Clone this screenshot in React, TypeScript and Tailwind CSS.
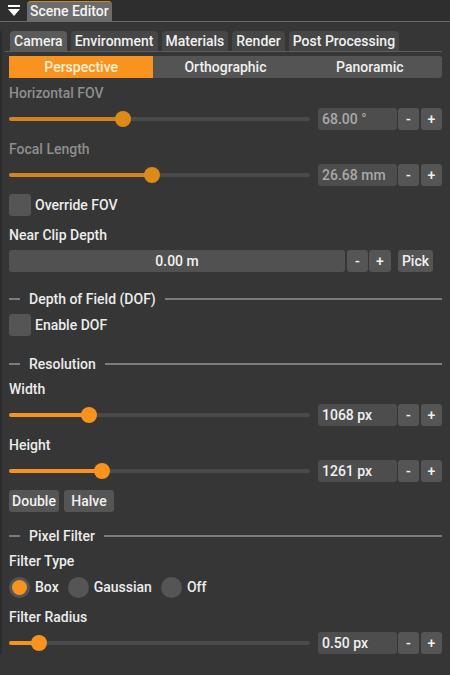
import React from 'react'

const ORANGE = 'bg-[#f7931e]'

function Label({ children, dim, className = '' }: { children: React.ReactNode; dim?: boolean; className?: string }) {
  return (
    <div className={`h-[16px] leading-[16px] ${dim ? 'text-[#8e8e8e]' : 'text-[#ececec]'} ${className}`}>
      {children}
    </div>
  )
}

function SmallBtn({ children, className = '' }: { children: React.ReactNode; className?: string }) {
  return (
    <div
      className={`flex h-[22px] items-center justify-center rounded-[3px] bg-[#555555] text-[#f0f0f0] ${className}`}
    >
      {children}
    </div>
  )
}

function SliderRow({
  pct,
  value,
  dim,
  className = '',
}: {
  pct: number
  value: string
  dim?: boolean
  className?: string
}) {
  const fill = dim ? 'bg-[#cf8420]' : 'bg-[#f7931e]'
  const knob = dim ? 'bg-[#de8a18]' : 'bg-[#f7931e]'
  return (
    <div className={`flex h-[22px] items-center ${className}`}>
      <div className="relative mr-[8px] h-[4px] flex-1 rounded-full bg-[#4a4a4a]">
        <div className={`absolute left-0 top-0 h-[4px] rounded-full ${fill}`} style={{ width: `${pct}%` }} />
        <div
          className={`absolute top-1/2 h-[16px] w-[16px] -translate-x-1/2 -translate-y-1/2 rounded-full ${knob}`}
          style={{ left: `${pct}%` }}
        />
      </div>
      <div
        className={`flex h-[22px] w-[79px] items-center rounded-[3px] bg-[#4d4d4d] pl-[4px] ${
          dim ? 'text-[#a8a8a8]' : 'text-[#f0f0f0]'
        }`}
      >
        {value}
      </div>
      <SmallBtn className={`ml-[1px] w-[21px] ${dim ? 'text-[#a8a8a8]' : ''}`}>-</SmallBtn>
      <SmallBtn className={`ml-[2px] w-[21px] ${dim ? 'text-[#d0d0d0]' : ''}`}>+</SmallBtn>
    </div>
  )
}

function Checkbox({ label, className = '' }: { label: string; className?: string }) {
  return (
    <div className={`flex h-[22px] items-center ${className}`}>
      <div className="h-[22px] w-[22px] rounded-[3px] bg-[#555555]" />
      <span className="ml-[4px] text-[#ececec]">{label}</span>
    </div>
  )
}

function Separator({ title, className = '' }: { title: string; className?: string }) {
  return (
    <div className={`flex h-[16px] items-center ${className}`}>
      <div className="h-[2px] w-[11px] bg-[#7c7c7c]" />
      <span className="ml-[9px] text-[#ececec]">{title}</span>
      <div className="ml-[9px] h-[2px] flex-1 bg-[#7c7c7c]" />
    </div>
  )
}

function Radio({ label, on }: { label: string; on?: boolean }) {
  return (
    <div className="flex items-center">
      <div className="flex h-[21px] w-[21px] items-center justify-center rounded-full bg-[#555555]">
        {on && <div className={`h-[15px] w-[15px] rounded-full ${ORANGE}`} />}
      </div>
      <span className="ml-[5px] mr-[9px] text-[#ececec]">{label}</span>
    </div>
  )
}

const tabs = ['Camera', 'Environment', 'Materials', 'Render', 'Post Processing']

export default function App() {
  return (
    <div
      className="h-[675px] w-[450px] overflow-hidden bg-[#363636] text-[14px] font-medium"
      style={{ fontFamily: 'Roboto, "Liberation Sans", sans-serif' }}
    >
      <div className="flex h-[21px] items-end bg-[#2e2e2e]">
        <svg width="12" height="12" viewBox="0 0 12 12" className="mb-[4px] ml-[8px]">
          <rect x="0" y="0" width="12" height="2" fill="#ffffff" />
          <path d="M0 4 L12 4 L6 11 Z" fill="#ffffff" />
        </svg>
        <div className="ml-[7px] flex h-[20px] items-center rounded-t-[4px] border-t border-[#c98a2e] bg-[#6c6c6c] px-[3px] text-[#f4f4f4]">
          Scene Editor
        </div>
      </div>
      <div className="h-[1px] bg-[#6a6a6a]" />

      <div className="border-l-2 border-[#2c2c2c] pl-[7px] pr-[8px]">
        <div className="mt-[9px] flex gap-[4px] pl-[1px]">
          {tabs.map((t, i) => (
            <div
              key={t}
              className={`flex h-[20px] items-center rounded-t-[4px] px-[4px] text-[#f0f0f0] ${
                i === 0 ? 'bg-[#5a5a5a]' : 'bg-[#464646]'
              }`}
            >
              {t}
            </div>
          ))}
        </div>
        <div className="-ml-[4px] h-[1px] bg-[#5e5e5e]" />

        <div className="mt-[4px] flex h-[22px]">
          <div className={`flex flex-1 items-center justify-center ${ORANGE} text-[#fff1d6]`}>Perspective</div>
          <div className="flex flex-1 items-center justify-center bg-[#545454] text-[#f0f0f0]">Orthographic</div>
          <div className="flex flex-1 items-center justify-center rounded-r-[3px] bg-[#545454] text-[#f0f0f0]">
            Panoramic
          </div>
        </div>

        <Label dim className="mt-[7px]">Horizontal FOV</Label>
        <SliderRow dim pct={38} value="68.00 °" className="mt-[7px]" />
        <Label dim className="mt-[11px]">Focal Length</Label>
        <SliderRow dim pct={47.5} value="26.68 mm" className="mt-[7px]" />
        <Checkbox label="Override FOV" className="mt-[8px]" />

        <Label className="mt-[11px]">Near Clip Depth</Label>
        <div className="mt-[7px] flex h-[22px] items-center">
          <div className="flex h-[22px] flex-1 items-center justify-center rounded-[3px] bg-[#515151] text-[#f0f0f0]">
            0.00 m
          </div>
          <SmallBtn className="ml-[2px] w-[21px]">-</SmallBtn>
          <SmallBtn className="ml-[1px] w-[22px]">+</SmallBtn>
          <SmallBtn className="ml-[7px] mr-[9px] w-[35px]">Pick</SmallBtn>
        </div>

        <Separator title="Depth of Field (DOF)" className="mt-[19px]" />
        <Checkbox label="Enable DOF" className="mt-[7px]" />

        <Separator title="Resolution" className="mt-[20px]" />
        <Label className="mt-[9px]">Width</Label>
        <SliderRow pct={26.5} value="1068 px" className="mt-[7px]" />
        <Label className="mt-[11px]">Height</Label>
        <SliderRow pct={31} value="1261 px" className="mt-[7px]" />
        <div className="mt-[8px] flex gap-[5px]">
          <SmallBtn className="w-[50px]">Double</SmallBtn>
          <SmallBtn className="w-[50px]">Halve</SmallBtn>
        </div>

        <Separator title="Pixel Filter" className="mt-[16px]" />
        <Label className="mt-[9px]">Filter Type</Label>
        <div className="mt-[7px] flex h-[22px] items-center">
          <Radio label="Box" on />
          <Radio label="Gaussian" />
          <Radio label="Off" />
        </div>
        <Label className="mt-[11px]">Filter Radius</Label>
        <SliderRow pct={10} value="0.50 px" className="mt-[7px]" />
      </div>
    </div>
  )
}
